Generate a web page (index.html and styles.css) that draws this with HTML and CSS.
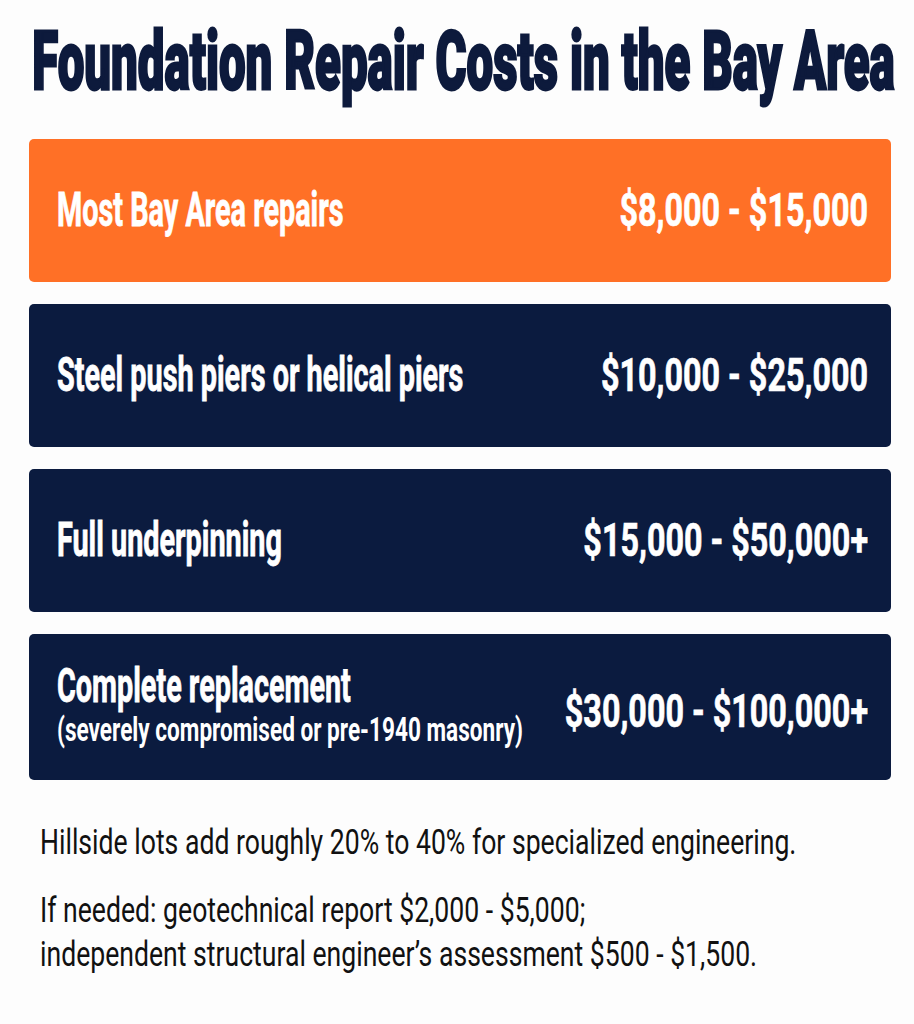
FILE: index.html
```html
<!DOCTYPE html>
<html lang="en">
<head>
<meta charset="utf-8">
<title>Foundation Repair Costs in the Bay Area</title>
<link rel="stylesheet" href="styles.css">
</head>
<body>
<main class="page">
  <h1 class="title"><span class="title-text">Foundation Repair Costs in the Bay Area</span></h1>
  <section class="costs">
    <div class="card card-accent">
      <span class="label">Most Bay Area repairs</span>
      <span class="price">$8,000 - $15,000</span>
    </div>
    <div class="card">
      <span class="label">Steel push piers or helical piers</span>
      <span class="price">$10,000 - $25,000</span>
    </div>
    <div class="card">
      <span class="label">Full underpinning</span>
      <span class="price">$15,000 - $50,000+</span>
    </div>
    <div class="card card-tall">
      <div class="label-group">
        <span class="label">Complete replacement</span>
        <span class="sublabel">(severely compromised or pre-1940 masonry)</span>
      </div>
      <span class="price">$30,000 - $100,000+</span>
    </div>
  </section>
  <section class="notes">
    <p class="note"><span class="note-line">Hillside lots add roughly 20% to 40% for specialized engineering.</span></p>
    <p class="note"><span class="note-line">If needed: geotechnical report $2,000 - $5,000;</span><span class="note-line">independent structural engineer’s assessment $500 - $1,500.</span></p>
  </section>
</main>
</body>
</html>
```
FILE: styles.css
```css
html, body {
  margin: 0;
  background: #fdfdfd;
}

body {
  font-family: Roboto, "Liberation Sans", Arial, sans-serif;
}

.page {
  padding: 38.5px 23px 0 29px;
}

.title {
  margin: 0;
  height: 47px;
  display: flex;
  justify-content: center;
  padding-left: 7px;
}

.title-text {
  display: block;
  font-size: 47.4px;
  line-height: 47px;
  font-weight: 900;
  color: #0d1a3c;
  white-space: nowrap;
  transform: scaleY(1.72);
  -webkit-text-stroke: 1.6px #0d1a3c;
}

.costs {
  display: flex;
  flex-direction: column;
  gap: 22px;
  margin-top: 53.5px;
}

.card {
  box-sizing: border-box;
  height: 143px;
  display: flex;
  align-items: center;
  justify-content: space-between;
  padding: 0 23px 0 28px;
  border-radius: 5px;
  background: #0b1b3f;
  color: #ffffff;
}

.card-accent {
  background: #ff7026;
}

.card-tall {
  height: 146px;
}

.label {
  display: block;
  font-size: 28.8px;
  line-height: 1;
  font-weight: 700;
  white-space: nowrap;
  transform: scaleY(1.66);
  -webkit-text-stroke: 0.5px #ffffff;
}

.price {
  display: block;
  font-size: 32.3px;
  line-height: 1;
  font-weight: 700;
  white-space: nowrap;
  transform: scaleY(1.44);
  -webkit-text-stroke: 0.5px #ffffff;
}

.card-tall .price {
  margin-top: 8px;
}

.label-group {
  display: flex;
  flex-direction: column;
}

.label-group .label {
  line-height: 48px;
}

.sublabel {
  display: block;
  font-size: 22.6px;
  line-height: 44px;
  font-weight: 700;
  white-space: nowrap;
  transform: scaleY(1.43);
}

.notes {
  margin-top: 40px;
  padding-left: 11px;
}

.note {
  margin: 0 0 23.5px;
}

.note-line {
  display: block;
  font-size: 26.6px;
  line-height: 44px;
  font-weight: 400;
  color: #111111;
  white-space: nowrap;
  transform: scaleY(1.32);
}
```
